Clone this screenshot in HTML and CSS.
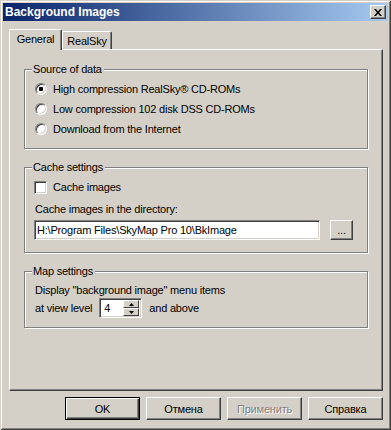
FILE: index.html
```html
<!DOCTYPE html>
<html lang="en">
<head>
    <meta charset="UTF-8">
    <title>Background Images</title>
    <link rel="stylesheet" href="styles.css">
</head>
<body>

    <div class="window">
        <div class="titlebar">
            <span class="title">Background Images</span>
            <button class="close" type="button">
                <svg width="8" height="7" viewBox="0 0 8 7"><path d="M0 0h2l2 2.5L6 0h2L5 3.5 8 7H6L4 4.5 2 7H0l3-3.5z" fill="#000"/></svg>
            </button>
        </div>

        <div class="dialog">
            <div class="tabs">
                <div class="tab active">General</div>
                <div class="tab">RealSky</div>
            </div>

            <div class="panel">
                <div class="group source">
                    <div class="legend">Source of data</div>
                    <label class="row"><input type="radio" name="src" checked> High compression RealSky® CD-ROMs</label>
                    <label class="row"><input type="radio" name="src"> Low compression 102 disk DSS CD-ROMs</label>
                    <label class="row"><input type="radio" name="src"> Download from the Internet</label>
                </div>

                <div class="group cache">
                    <div class="legend">Cache settings</div>
                    <label class="row check-row"><input type="checkbox"> Cache images</label>
                    <div class="line">Cache images in the directory:</div>
                    <div class="path-row">
                        <input class="field" type="text" value="H:\Program Files\SkyMap Pro 10\BkImage">
                        <button class="btn browse" type="button">...</button>
                    </div>
                </div>

                <div class="group map">
                    <div class="legend">Map settings</div>
                    <div class="line">Display "background image" menu items</div>
                    <div class="level-row">
                        <span>at view level</span>
                        <div class="spin">
                            <span class="spin-value">4</span>
                            <div class="spin-btns">
                                <span class="spin-btn"><svg width="5" height="3" viewBox="0 0 5 3"><path d="M2.5 0L5 3H0z" fill="#000"/></svg></span>
                                <span class="spin-btn"><svg width="5" height="3" viewBox="0 0 5 3"><path d="M0 0h5L2.5 3z" fill="#000"/></svg></span>
                            </div>
                        </div>
                        <span>and above</span>
                    </div>
                </div>
            </div>

            <div class="buttons">
                <button class="btn default" type="button">OK</button>
                <button class="btn" type="button">Отмена</button>
                <button class="btn disabled" type="button">Применить</button>
                <button class="btn" type="button">Справка</button>
            </div>
        </div>
    </div>

</body>
</html>
```

FILE: styles.css
```css
* {
    box-sizing: border-box;
}

html,
body {
    margin: 0;
    padding: 0;
}

body {
    width: 391px;
    height: 430px;
    overflow: hidden;
    background: #d4d0c8;
    font-family: "Liberation Sans", Arial, sans-serif;
    font-size: 11px;
    letter-spacing: -0.2px;
    color: #000;
}

.window {
    width: 391px;
    height: 430px;
    padding: 3px;
    background: #d4d0c8;
    box-shadow: inset 1px 1px 0 #d4d0c8, inset -1px -1px 0 #404040,
        inset 2px 2px 0 #fff, inset -2px -2px 0 #808080;
}

.titlebar {
    height: 18px;
    display: flex;
    align-items: center;
    justify-content: space-between;
    padding: 0 2px 0 2px;
    background: linear-gradient(to right, #0a246a, #a6caf0);
}

.title {
    color: #fff;
    font-weight: bold;
    font-size: 12px;
    letter-spacing: 0;
}

.close {
    width: 16px;
    height: 14px;
    padding: 0;
    display: flex;
    align-items: center;
    justify-content: center;
    background: #d4d0c8;
    border: 1px solid;
    border-color: #fff #404040 #404040 #fff;
    box-shadow: inset -1px -1px 0 #808080;
}

.dialog {
    padding: 8px 5px 0 6px;
}

.tabs {
    display: flex;
    align-items: flex-end;
    height: 20px;
}

.tab {
    width: 50px;
    height: 18px;
    padding-top: 3px;
    text-align: center;
    border-left: 1px solid #fff;
    border-top: 1px solid #fff;
    border-right: 1px solid #404040;
    border-radius: 2px 2px 0 0;
    box-shadow: inset -1px 0 0 #808080;
    background: #d4d0c8;
}

.tab.active {
    position: relative;
    z-index: 1;
    width: 53px;
    height: 21px;
    margin-bottom: -1px;
    padding-top: 3px;
}

.panel {
    height: 342px;
    padding: 19px 14px 12px;
    border: 1px solid;
    border-color: #fff #404040 #404040 #fff;
    box-shadow: inset -1px -1px 0 #808080;
}

.group {
    border: 1px solid #808080;
    box-shadow: 1px 1px 0 #fff, inset 1px 1px 0 #fff;
    padding: 0 13px 9px 9px;
}

.group + .group {
    margin-top: 18px;
}

.legend {
    width: fit-content;
    height: 14px;
    line-height: 14px;
    margin: -8px 0 3px -2px;
    padding: 0 2px 0 1px;
    background: #d4d0c8;
}

.row {
    display: flex;
    align-items: center;
    gap: 6px;
    height: 20px;
}

input[type="radio"] {
    appearance: none;
    margin: 0 0 0 1px;
    width: 12px;
    height: 12px;
    border-radius: 50%;
    border: 1px solid;
    border-color: #808080 #fff #fff #808080;
    box-shadow: inset 1px 1px 0 #404040, inset -1px -1px 0 #d4d0c8;
    background: #fff;
}

input[type="radio"]:checked {
    background: radial-gradient(circle, #000 0, #000 2px, #fff 2.5px);
}

input[type="checkbox"] {
    appearance: none;
    margin: 0;
    width: 13px;
    height: 13px;
    border: 1px solid;
    border-color: #808080 #fff #fff #808080;
    box-shadow: inset 1px 1px 0 #404040, inset -1px -1px 0 #d4d0c8;
    background: #fff;
}

.cache {
    padding-bottom: 12px;
}

.line {
    height: 14px;
    line-height: 14px;
    margin-top: 5px;
    padding-left: 1px;
}

.path-row {
    display: flex;
    gap: 10px;
    margin-top: 4px;
}

.field {
    width: 286px;
    height: 20px;
    margin: 0;
    padding: 0 2px;
    font-family: inherit;
    font-size: 11px;
    letter-spacing: -0.2px;
    background: #fff;
    border: 1px solid;
    border-color: #808080 #fff #fff #808080;
    box-shadow: inset 1px 1px 0 #404040, inset -1px -1px 0 #d4d0c8;
    outline: none;
}

.btn {
    height: 23px;
    width: 75px;
    margin: 0;
    padding: 0;
    font-family: inherit;
    font-size: 11px;
    letter-spacing: -0.2px;
    color: #000;
    background: #d4d0c8;
    border: 1px solid;
    border-color: #fff #404040 #404040 #fff;
    box-shadow: inset -1px -1px 0 #808080;
}

.btn.browse {
    width: 23px;
    height: 20px;
    line-height: 14px;
}

.btn.default {
    border: 1px solid #000;
    box-shadow: inset 1px 1px 0 #fff, inset -1px -1px 0 #404040, inset -2px -2px 0 #808080;
}

.btn.disabled {
    color: #808080;
    text-shadow: 1px 1px 0 #fff;
}

.map .line {
    margin-top: 5px;
}

.level-row {
    display: flex;
    align-items: center;
    gap: 7px;
    height: 20px;
    margin-top: 1px;
    padding-left: 1px;
}

.spin {
    display: flex;
    align-items: center;
    justify-content: space-between;
    width: 43px;
    height: 20px;
    padding: 2px;
    background: #fff;
    border: 1px solid;
    border-color: #808080 #fff #fff #808080;
    box-shadow: inset 1px 1px 0 #404040, inset -1px -1px 0 #d4d0c8;
}

.spin-value {
    padding-left: 2px;
}

.spin-btns {
    display: flex;
    flex-direction: column;
    width: 16px;
    height: 16px;
}

.spin-btn {
    flex: 1;
    display: flex;
    align-items: center;
    justify-content: center;
    background: #d4d0c8;
    border: 1px solid;
    border-color: #fff #404040 #404040 #fff;
}

.buttons {
    display: flex;
    justify-content: flex-end;
    gap: 6px;
    margin-top: 6px;
}
```
